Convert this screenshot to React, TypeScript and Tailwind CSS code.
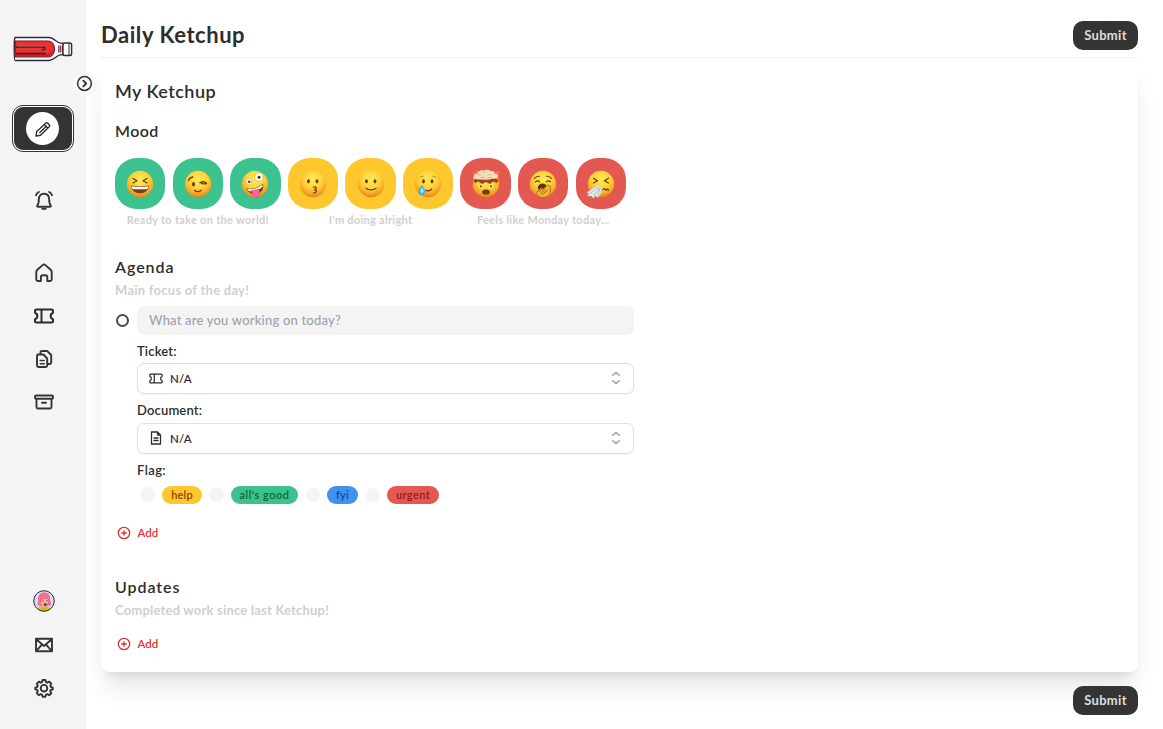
import React from "react";

type Face = "laugh" | "wink" | "zany" | "kiss" | "smile" | "tear" | "blown" | "yawn" | "sneeze";

const svgBase = {
  fill: "none",
  stroke: "currentColor",
  strokeWidth: 2,
  strokeLinecap: "round" as const,
  strokeLinejoin: "round" as const,
};

function Emoji({ face }: { face: Face }) {
  const b = "#6b3d0c";
  return (
    <svg viewBox="0 0 30 32" className="h-8 w-[30px]" fill="none" strokeLinecap="round" strokeLinejoin="round">
      <defs>
        <radialGradient id={"g-" + face} cx="50%" cy="32%" r="70%">
          <stop offset="0" stopColor="#ffea55" />
          <stop offset="0.5" stopColor="#fdd23a" />
          <stop offset="0.8" stopColor="#f5a524" />
          <stop offset="1" stopColor="#df7a17" />
        </radialGradient>
      </defs>
      <circle cx="15" cy="16" r="13.2" fill={`url(#g-${face})`} />
      {face === "laugh" && (
        <>
          <path d="M8 10.500l4 2.300-4 2.200M22 10.500l-4 2.300 4 2.200" stroke={b} strokeWidth="1.300" />
          <path d="M6 17.500c6 1 12 1 18 0-.4 5-4.200 7.800-9 7.800S6.400 22.500 6 17.500z" fill="#75410f" />
          <path d="M6.600 18.200c5.500.8 11.500.8 16.800 0-.3 2-1 3-1.900 3h-13c-1 0-1.700-1-1.900-3z" fill="#fff" />
        </>
      )}
      {face === "wink" && (
        <>
          <ellipse cx="10.500" cy="16.300" rx="1.500" ry="2.300" fill={b} />
          <path d="M5.500 12.500c.8-2 2.200-3.200 4.300-3.500M17 14.700c2.300-1.300 4.500-1.300 6.500.5M18.500 15.700l4.500.1M11.500 22.300c2.200 1.800 4.600 1.800 6.800 0" stroke={b} strokeWidth="1.300" />
        </>
      )}
      {face === "zany" && (
        <>
          <path d="M6 20.500c7 1 13-1 17-5 1.300 5-1.500 9-5.500 10.300C12.500 27 8 24.500 6 20.500z" fill="#75410f" />
          <path d="M7 21c6 .8 11.500-1 15.500-4.500l.2 2.200C18.500 22.200 13.500 24 8.700 23z" fill="#fff" />
          <path d="M11.700 22.700l7-1.700c1 4 .8 8.500-2.500 8.500s-4-3.500-4.500-6.800z" fill="#ff6591" stroke="#e74478" strokeWidth=".6" />
          <circle cx="9" cy="13.500" r="2.900" fill="#fff" stroke="#c99a35" strokeWidth=".5" />
          <circle cx="9.200" cy="13.800" r="1.200" fill="#482b14" />
          <circle cx="19" cy="9" r="4.300" fill="#fff" stroke="#c99a35" strokeWidth=".5" />
          <circle cx="19" cy="9.200" r="1.500" fill="#482b14" />
        </>
      )}
      {(face === "kiss" || face === "smile" || face === "tear") && (
        <>
          <ellipse cx="10.500" cy="13.300" rx="1.400" ry="2.100" fill={b} />
          <ellipse cx="19" cy="13.300" rx="1.400" ry="2.100" fill={b} />
        </>
      )}
      {face === "kiss" && (
        <path d="M15.300 19.300c3-1.200 4.200 1 1.200 2.500 3.300.3 2.200 3.300-.9 3" stroke={b} strokeWidth="1.200" />
      )}
      {face === "smile" && <path d="M10 20.300c2.700 2.200 7.300 2.200 10 0" stroke={b} strokeWidth="1.300" />}
      {face === "tear" && (
        <>
          <path d="M7 9.500c1-1 2-1.300 3.300-1.300M19.700 8.200c1.300 0 2.300.4 3.300 1.300" stroke="#b87415" strokeWidth=".9" />
          <path d="M13 22.300c2.500 1 4.200.5 5.500-1.200" stroke={b} strokeWidth="1.300" />
          <path d="M8.800 16.500c1 2.500 3.400 4.600 3.400 7a3.400 3.400 0 0 1-6.800 0c0-2.400 2.600-4.500 3.400-7z" fill="#38aef0" />
          <path d="M9 19c.8 2 2 3 1.600 4.800a1.700 1.700 0 0 1-3 .5c-.9-1.600.8-3 1.400-5.300z" fill="#a2e5ff" />
        </>
      )}
      {face === "blown" && (
        <>
          <path d="M0 0h30v10H0z" fill="#e35951" />
          <path d="M3 5l2.500 2M25 6l2.500-2M2.500 10l2 2M27.500 10l-2 2M6 3l1 1.500" stroke="#ff9c32" strokeWidth="1.300" />
          <path d="M2.500 12.500l3-2.500h19l3 2.500-1.500 2.500-4-1.500-3 2.500-4-2-4 2-3.500-2.500-3.500 1.500z" fill="#a83c20" />
          <path d="M9 11.500c-4 .5-7-1-6.500-3C3 6 5 5.500 6.500 5.800 7 3 10 1.500 12.500 2.700 14.500 1 18 1.500 19.500 3c3-.5 4.500.7 4.500 3 3 0 4 1.500 2.500 3.500-1.500 1.500-3.500 1.300-5.500 1.300l-4 1z" fill="#f4dfbd" />
          <path d="M7 7c1-1 2-1 3 0M12 4.500c1-1 2-.8 3 0M17 7c1-1 2.500-1 3.500 0M10 9.500h4M17 9.500h3" stroke="#cda779" strokeWidth=".8" />
          <circle cx="10" cy="18.300" r="2" fill="#fff0a2" /><circle cx="20" cy="18.300" r="2" fill="#fff0a2" />
          <circle cx="10" cy="18.300" r="1.100" fill={b} /><circle cx="20" cy="18.300" r="1.100" fill={b} />
          <ellipse cx="15" cy="24" rx="3.900" ry="2.600" fill={b} />
        </>
      )}
      {face === "yawn" && (
        <>
          <path d="M6.500 10.500c1.500-2 3-2.500 4.700-2.200M18.800 8.300c1.800-.3 3.300.3 4.700 2.200M7.500 13.800c1.500-1.200 3-1.200 4 0M18.500 13.800c1-1.200 2.500-1.200 4 0" stroke={b} strokeWidth="1.200" />
          <ellipse cx="14.500" cy="19.500" rx="4.600" ry="4" fill="#663307" />
          <path d="M9.500 23.500l3.500-3.600 2.500 1.100 4.300-4.300 1.200 1.300 1.200-.1.100 6.500c-2 5.100-9 6.700-12.300 3.100-1.700-1.700-1.500-3-.5-4z" fill="#f9bb35" stroke="#a46111" strokeWidth=".8" />
          <path d="M11 23.800l3.300-2.800M12.500 25.800l4.500-4.300M14.500 27l5-5" stroke="#8d500d" strokeWidth=".9" />
        </>
      )}
      {face === "sneeze" && (
        <>
          <path d="M7.500 10.300l4 2.500-4 2.200M22.500 10.300l-4 2.500 4 2.200" stroke={b} strokeWidth="1.300" />
          <path d="M17 21.500l1.500-1 1.300 1.700 1.700-1.200 1 1.200" stroke={b} strokeWidth="1.200" />
          <path d="M12 17l4 2.500-.7 5.500-3.300 4.500-2.300-1.600-2.500 2.400-2-2.300-3.500.1 1-3.100-2-.5 6-4z" fill="#e8e8e8" stroke="#bbbbc0" strokeWidth=".5" />
          <path d="M12 19l-8 7M13 20l-5 8M14 20l-2 7" stroke="#a9a9ae" strokeWidth=".7" />
        </>
      )}
    </svg>
  );
}

function Ketchup() {
  return (
    <svg viewBox="0 0 60 28" className="h-7 w-[60px]" fill="none" strokeLinejoin="round">
      <path d="M2 2.500h34c5 0 7 4.800 11 5.600h3v11.800h-3c-4 .8-6 5.600-11 5.600H2c-1 0-1-23 0-23z" fill="#fff" stroke="#292a38" strokeWidth="1.400" />
      <path d="M2.300 6h33c4 0 6.200 4 6.200 8s-2.200 8-6.200 8h-33z" fill="#e73331" stroke="#7b1d2b" strokeWidth="1.200" />
      <path d="M2.500 19H34c3 0 4.500-2 6-4.500-.8 4-2.500 6.800-5.500 6.800h-32z" fill="#c61e2d" />
      <path d="M3 12h26q3 0 3 1.400t-3 1.400M3 18.500h30" stroke="#392033" strokeWidth="1.400" />
      <path d="M4 11h26" stroke="#f25a58" strokeWidth=".8" />
      <path d="M45.800 10.500v7" stroke="#292a38" strokeWidth="1" />
      <path d="M47.500 10.500v7" stroke="#d02c36" strokeWidth="1.800" />
      <rect x="50" y="8" width="8.600" height="12.500" rx="1.800" fill="#fff" stroke="#292a38" strokeWidth="1.400" />
      <path d="M56 8.500v11.500" stroke="#292a38" strokeWidth="1" />
    </svg>
  );
}

function Avatar() {
  return (
    <svg viewBox="0 0 22 22" className="size-[22px]" fill="none">
      <circle cx="11" cy="11" r="10.300" fill="#d9d9fb" />
      <path d="M5.200 15.500c-1.700-.7.400-3.200-.1-5.500C4.700 4.800 7.500 2.500 11.200 2.500c4 0 6.100 2.700 5.900 6.500-.2 2.200 2 5 .6 6.500-2.500.9-10 1-12.500 0z" fill="#f7708c" />
      <path d="M8 9.500l6-1.500 1.200 1.700v4.100l-2 2.300v2H9v-2.500c-2-1.800-1.600-3.500-1-6.100z" fill="#f6b29d" stroke="#a2565c" strokeWidth=".4" />
      <path d="M8.500 11h2M13 10.800h1.500" stroke="#6d3a41" strokeWidth=".8" />
      <path d="M10.500 13.500h3.500l-.8 2.200h-2z" fill="#592e35" />
      <path d="M5 19c1-2.500 3-2.700 4-2.300 1 1.200 3.200 1.200 4.500 0 2-.2 3.500 1 4 2-3.500 3.400-8.500 3.400-12.500.3z" fill="#d9b61f" />
      <circle cx="11" cy="11" r="10.300" stroke="#303030" strokeWidth="1" />
    </svg>
  );
}

function TicketIcon({ className, weight = 2 }: { className: string; weight?: number }) {
  return (
    <svg viewBox="0 0 20 16" className={className} {...svgBase} strokeWidth={weight}>
      <path d="M1 3Q1 1.500 2.500 1.500h15Q19 1.500 19 3v1.700a3.500 3.500 0 0 0 0 6.600V13q0 1.500-1.500 1.500h-15Q1 14.500 1 13v-1.700a3.500 3.500 0 0 0 0-6.600zM7.500 1.500v13" />
    </svg>
  );
}

function NavIcon({ name }: { name: string }) {
  return (
    <svg viewBox="0 0 24 24" className="size-6 text-[#343434]" {...svgBase} strokeWidth={1.900}>
      {name === "bell" && (
        <>
          <path d="M5.300 17.500c1.200-1.200 1.500-3.500 1.500-6C6.800 7.700 9 5.800 12 5.800s5.200 1.900 5.200 5.700c0 2.500.3 4.800 1.500 6 .6.700.2 1.200-.6 1.200H5.900c-.8 0-1.200-.5-.6-1.200z" />
          <path d="M10.300 20.700h3.400M4 7.300C4.500 5.700 5.400 4.700 6.900 4M20 7.300c-.5-1.600-1.400-2.600-2.900-3.300" />
        </>
      )}
      {name === "home" && <path d="M4.300 11c0-1 .4-1.700 1.100-2.300l5.200-4.600c.9-.8 1.900-.8 2.800 0l5.200 4.600c.7.600 1.100 1.300 1.100 2.300v7.500c0 1-.7 1.500-1.500 1.500h-2.900v-3.700c0-1.300-.9-2-2-2h-2.400c-1.100 0-2 .7-2 2V20H5.800c-.8 0-1.500-.5-1.500-1.500z" />}
      {name === "files" && (
        <>
          <path d="M5.500 7.500h6l3.700 4v7c0 1-.5 1.500-1.500 1.500H6.500c-1 0-1.500-.5-1.500-1.500V9c0-1 .5-1.500 1.500-1.500z" />
          <path d="M8.500 6.500V5.300c0-.9.500-1.300 1.500-1.300h5.200l4 4v7.500c0 1-.5 1.500-1.500 1.500h-1.200" />
          <path d="M8.200 13.500h4M8.200 16.700h4" strokeWidth="1.600" />
        </>
      )}
      {name === "archive" && <path d="M4.500 9v8c0 1 .5 1.500 1.500 1.500h12c1 0 1.500-.5 1.500-1.500V9M4 5.500h16c.8 0 1 .4 1 1v1c0 .8-.3 1.300-1 1.300H4c-.7 0-1-.5-1-1.300v-1c0-.6.200-1 1-1zM10 12.700h4" />}
      {name === "mail" && <path d="M4 5.800h16v12.400H4zM4.300 6.200L12 13l7.700-6.800M4.300 17.900l5.200-5.700M19.700 17.900l-5.200-5.700" />}
      {name === "gear" && (
        <>
          <path d="M10.500 4h3l.6 2.200 1.200.5 2-1.100 2 2.100-1 2 .5 1.300 2 .7v1.600l-2.100.7-.5 1.200 1.100 2-2.100 2-1.900-1-1.200.5-.8 2h-2.600l-.8-2.100-1.200-.5-1.900 1.100-2-2 1-2-.5-1.200-2-.7v-1.600l2-.7.5-1.300-1-1.900 2-2.200 2 1.100 1.200-.5z" />
          <circle cx="12" cy="12.200" r="3.300" />
        </>
      )}
    </svg>
  );
}

function Mood({ faces, color, label }: { faces: Face[]; color: string; label: string }) {
  return (
    <div className="flex flex-col items-center">
      <div className="flex gap-[7.2px]">
        {faces.map((face) => (
          <button key={face} className={"flex size-[50.4px] items-center justify-center rounded-[21.6px] " + color}>
            <Emoji face={face} />
          </button>
        ))}
      </div>
      <span>{label}</span>
    </div>
  );
}

function Select({ icon }: { icon: React.ReactNode }) {
  return (
    <button className="flex h-[31px] w-[497px] items-center rounded-[7px] border border-[#dedfe1] bg-white pr-[11px] pl-[11px] shadow-xs">
      {icon}
      <span className="ml-[7px] text-[11.500px] font-semibold">N/A</span>
      <svg viewBox="0 0 12 16" className="ml-auto h-4 w-3 text-[#98a0ae]" {...svgBase} strokeWidth={1.500}>
        <path d="M2.700 5.300L6 2.500l3.300 2.800M2.700 10.700L6 13.500l3.300-2.800" />
      </svg>
    </button>
  );
}

function Add() {
  return (
    <button className="flex h-4 items-center gap-[7px] pl-[1.500px] text-[#e0322f]">
      <svg viewBox="0 0 14 14" className="size-[14px]" {...svgBase} strokeWidth={1.300}>
        <circle cx="7" cy="7" r="5.700" />
        <path d="M7 4.700v4.600M4.700 7h4.600" />
      </svg>
      <span className="-mt-px text-[11.500px] font-semibold">Add</span>
    </button>
  );
}

const submit = "flex h-[28.5px] w-[65px] items-center justify-center rounded-[10px] bg-[#343434] text-[13px] font-bold tracking-[0.3px] text-[#dedede]";

export default function App() {
  return (
    <div className="flex h-[729px] w-[1163px] overflow-hidden bg-white font-['Lato',sans-serif] text-[#2d2d2d]">
      <aside className="relative flex w-[86px] shrink-0 flex-col items-center bg-[#f4f4f4] pt-[35px]">
        <div className="h-7"><Ketchup /></div>
        <button className="absolute top-[72px] left-[73px] z-10 flex size-6 items-center justify-center rounded-full bg-[#f7f7f7] text-[#343434]">
          <svg viewBox="0 0 18 18" className="-mt-px -ml-px size-[17px]" {...svgBase} strokeWidth={1.600}>
            <circle cx="9" cy="9" r="7.300" /><path d="M7.800 6l3 3-3 3" strokeWidth="2" />
          </svg>
        </button>
        <button className="mt-[42px] flex h-[47px] w-[62px] items-center justify-center rounded-[11px] border border-[#343434] bg-white p-px">
          <span className="flex h-full w-full items-center justify-center rounded-[9px] bg-[#343434]">
            <span className="-ml-px flex size-[33px] items-center justify-center rounded-full bg-white">
              <svg viewBox="0 0 18 18" className="size-[18px]" {...svgBase} strokeWidth={1.400}>
                <path d="M2 16l.7-4.500 9-8.300q1-.9 2 0l1.500 1.500q1 1 0 2L6.500 15.300zM10.300 4.600l3.500 3.500M5.800 12.500l6-5.800" />
              </svg>
            </span>
          </span>
        </button>
        <nav className="mt-9 flex flex-col items-center pl-[2px]">
          <NavIcon name="bell" />
          <div className="mt-[49px] flex flex-col items-center gap-[19px]">
            <NavIcon name="home" />
            <span className="flex size-6 items-center justify-center"><TicketIcon className="h-4 w-5" /></span>
            <NavIcon name="files" />
            <NavIcon name="archive" />
          </div>
        </nav>
        <div className="mt-auto mb-[29px] flex flex-col items-center gap-[19px] pl-[2px]">
          <span className="flex size-6 items-start justify-center"><Avatar /></span>
          <NavIcon name="mail" />
          <NavIcon name="gear" />
        </div>
      </aside>
      <main className="flex flex-1 flex-col pr-[25px] pl-[15px]">
        <header className="flex h-[58px] items-start justify-between border-b border-[#f1f1f1] pt-[21px]">
          <h1 className="text-[22px] leading-7 font-bold tracking-[0.55px]">Daily Ketchup</h1>
          <button className={submit}>Submit</button>
        </header>
        <section className="flex h-[614px] flex-col items-start rounded-lg bg-white px-[14px] pt-[21px] shadow-xl">
          <h2 className="h-6 text-[18px] leading-6 font-semibold tracking-[0.45px]">My Ketchup</h2>
          <h3 className="mt-[18px] h-5 text-[16px] leading-5 font-semibold tracking-[0.45px]">Mood</h3>
          <div className="mt-[17.4px] flex h-[69.6px] gap-[7.2px] text-[11px] leading-[21px] font-bold tracking-[0.28px] text-[#d0d0d0]">
            <Mood faces={["laugh", "wink", "zany"]} color="bg-[#3cc28f]" label="Ready to take on the world!" />
            <Mood faces={["kiss", "smile", "tear"]} color="bg-[#ffc72e]" label="I'm doing alright" />
            <Mood faces={["blown", "yawn", "sneeze"]} color="bg-[#e35951]" label="Feels like Monday today..." />
          </div>
          <h3 className="mt-[29px] h-5 text-[16px] leading-5 font-semibold tracking-[0.95px]">Agenda</h3>
          <p className="mt-[3px] h-5 text-[13px] leading-5 font-bold tracking-[0.26px] text-[#d0d0d0]">Main focus of the day!</p>
          <div className="mt-[6px] flex h-[29px] items-center">
            <span className="mr-2 ml-px size-[13px] rounded-full border-2 border-[#4a4a4a]" />
            <input className="h-[29px] w-[497px] rounded-[7px] bg-[#f4f4f4] px-3 text-[13px] font-medium tracking-[0.2px] placeholder:text-[#9ca3af]" placeholder="What are you working on today?" />
          </div>
          <div className="flex flex-col items-start pl-[22px] text-[13px] font-semibold tracking-[0.16px]">
            <span className="mt-[6px] h-5 leading-5">Ticket:</span>
            <span className="mt-[2px]"><Select icon={<TicketIcon className="h-[11px] w-[14px]" weight={1.800} />} /></span>
            <span className="mt-[6px] h-5 leading-5">Document:</span>
            <span className="mt-[3px]">
              <Select icon={
                <svg viewBox="0 0 14 14" className="size-[14px]" {...svgBase} strokeWidth={1.300}>
                  <path d="M2.500 1h6l3 3v9h-9zM8.500 1v3h3M5 7h4M5 9.500h4" />
                </svg>
              } />
            </span>
            <span className="mt-[6px] h-5 leading-5 tracking-[0.4px]">Flag:</span>
            <div className="mt-[6px] flex h-[18px] items-center pl-[3px] text-[11px] leading-[18px]">
              <i className="mr-[7px] size-[15px] rounded-full bg-[#f4f4f4]" />
              <span className="w-10 rounded-full bg-[#ffc72e] text-center text-[#92400e]">help</span>
              <i className="mr-[7px] ml-[7px] size-[15px] rounded-full bg-[#f4f4f4]" />
              <span className="w-[67px] rounded-full bg-[#3cc28f] text-center tracking-[0.5px] text-[#166534]">all's good</span>
              <i className="mr-[7px] ml-2 size-[14px] rounded-full bg-[#f4f4f4]" />
              <span className="w-[31px] rounded-full bg-[#3f92ee] text-center text-[#1e40af]">fyi</span>
              <i className="mr-[7px] ml-2 size-[14px] rounded-full bg-[#f4f4f4]" />
              <span className="w-[52px] rounded-full bg-[#e35951] text-center tracking-[0.4px] text-[#991b1b]">urgent</span>
            </div>
          </div>
          <div className="mt-[21px]"><Add /></div>
          <h3 className="mt-[36px] h-5 text-[16px] leading-5 font-semibold tracking-[0.95px]">Updates</h3>
          <p className="mt-[3px] h-5 text-[13px] leading-5 font-bold tracking-[0.2px] text-[#d0d0d0]">Completed work since last Ketchup!</p>
          <div className="mt-[16px]"><Add /></div>
        </section>
        <div className="mt-[14px] flex justify-end"><button className={submit}>Submit</button></div>
      </main>
    </div>
  );
}
